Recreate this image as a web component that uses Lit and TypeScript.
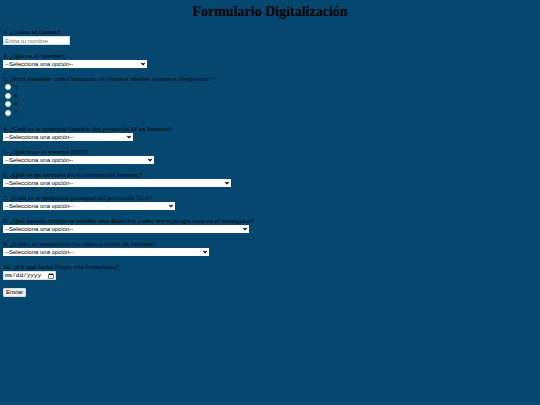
import { LitElement, html, css } from "lit";
import { customElement } from "lit/decorators.js";

interface Question {
  id: string;
  label: string;
  kind: "text" | "select" | "radio" | "date";
  width?: number;
  options?: string[];
}

const questions: Question[] = [
  { id: "q1", label: "1. ¿Como te llamas?", kind: "text" },
  { id: "q2", label: "2. ¿Que es el internet?", kind: "select", width: 144 },
  {
    id: "q3",
    label: "3. ¿Para entender cómo funciona, en cuantos niveles podemos desglosarlo?",
    kind: "radio",
    options: ["5", "6", "4", "7"],
  },
  { id: "q4", label: "4. ¿Cuál es la principal función del protocolo IP en Internet?", kind: "select", width: 130 },
  { id: "q5", label: "5. ¿Qué hace el sistema DNS?", kind: "select", width: 151 },
  { id: "q6", label: "6. ¿Qué es un servidor en el contexto de Internet?", kind: "select", width: 228 },
  { id: "q7", label: "7. ¿Cuál es el propósito principal del protocolo TCP?", kind: "select", width: 172 },
  {
    id: "q8",
    label: "8. ¿Qué sucede cuando se escribe una dirección como www.google.com en el navegador?",
    kind: "select",
    width: 246,
  },
  { id: "q9", label: "9. ¿Cómo se transportan los datos a través de Internet?", kind: "select", width: 206 },
  { id: "q10", label: "10. ¿En qué fecha llenas este formulario?", kind: "date" },
];

@customElement("app-root")
export class AppRoot extends LitElement {
  static styles = css`
    :host {
      display: block;
      box-sizing: border-box;
      min-height: 100vh;
      padding: 4px 3px;
      background: #05476f;
      color: #000;
      font: 7px/8px "Liberation Serif", serif;
    }
    .title {
      margin: 0 0 8px;
      font-size: 14px;
      line-height: 16px;
      font-weight: bold;
      text-align: center;
    }
    .form {
      display: flex;
      flex-direction: column;
      align-items: flex-start;
      gap: 7px;
    }
    .question {
      display: flex;
      flex-direction: column;
      align-items: flex-start;
      max-width: 100%;
      min-width: 0;
      margin: 0;
      padding: 0;
      border: 0;
    }
    .label {
      display: block;
      padding: 0;
    }
    .field,
    .select,
    .send {
      box-sizing: border-box;
      margin: 0;
      border: 0;
      border-radius: 0;
      font: 6px/8px "Liberation Sans", sans-serif;
      background: #fff;
      color: #000;
    }
    .field {
      height: 9px;
      padding: 0 1px;
      border: 1px solid #d5dce2;
      line-height: 7px;
    }
    .text {
      width: 67px;
    }
    .text::placeholder {
      color: #757575;
    }
    .date {
      width: 53px;
      font-family: "Liberation Mono", monospace;
    }
    .date::-webkit-datetime-edit,
    .date::-webkit-datetime-edit-fields-wrapper,
    .date::-webkit-datetime-edit-month-field,
    .date::-webkit-datetime-edit-day-field,
    .date::-webkit-datetime-edit-year-field {
      padding: 0;
    }
    .date::-webkit-calendar-picker-indicator {
      width: 6px;
      height: 6px;
      margin: 0;
      padding: 0;
    }
    .picker {
      display: grid;
      align-items: center;
      max-width: 100%;
    }
    .select {
      grid-area: 1 / 1;
      width: 100%;
      height: 8px;
      padding: 0 8px 0 2px;
      appearance: none;
    }
    .chevron {
      grid-area: 1 / 1;
      justify-self: end;
      width: 4px;
      height: 4px;
      margin-right: 2px;
      pointer-events: none;
      fill: none;
      stroke: #000;
      stroke-width: 1.2;
    }
    .choices {
      display: grid;
      grid-auto-rows: 1fr;
      height: 34px;
      padding-bottom: 1px;
    }
    .choice {
      display: flex;
      align-items: center;
      gap: 3px;
    }
    .radio {
      box-sizing: border-box;
      width: 6px;
      height: 6px;
      margin: 0 0 0 2px;
      appearance: none;
      border: 1px solid #d5dce2;
      border-radius: 50%;
      background: #fff;
    }
    .radio:checked {
      background: #0075ff;
    }
    .send {
      width: 23px;
      height: 9px;
      margin-top: 1px;
      padding: 0;
      border: 1px solid #d5dce2;
      border-radius: 1px;
      background: #efefef;
      line-height: 7px;
    }
  `;

  private renderControl(q: Question) {
    if (q.kind === "text") {
      return html`<input class="field text" id=${q.id} type="text" placeholder="Entra tu nombre" />`;
    }
    if (q.kind === "date") {
      return html`<input class="field date" id=${q.id} type="date" />`;
    }
    return html`
      <div class="picker" style="width: ${q.width}px">
        <select class="select" id=${q.id}>
          <option value="">--Selecciona una opción--</option>
        </select>
        <svg class="chevron" viewBox="0 0 4 4" aria-hidden="true"><path d="M.4 1 2 2.7 3.6 1" /></svg>
      </div>
    `;
  }

  private renderQuestion(q: Question) {
    if (q.kind === "radio") {
      return html`
        <fieldset class="question">
          <legend class="label">${q.label}</legend>
          <div class="choices">
            ${q.options!.map(
              (o) => html`<label class="choice"><input class="radio" type="radio" name=${q.id} value=${o} />${o}</label>`
            )}
          </div>
        </fieldset>
      `;
    }
    return html`
      <div class="question">
        <label class="label" for=${q.id}>${q.label}</label>
        ${this.renderControl(q)}
      </div>
    `;
  }

  render() {
    return html`
      <h1 class="title">Formulario Digitalización</h1>
      <form class="form" @submit=${(e: Event) => e.preventDefault()}>
        ${questions.map((q) => this.renderQuestion(q))}
        <button class="send" type="submit">Enviar</button>
      </form>
    `;
  }
}
